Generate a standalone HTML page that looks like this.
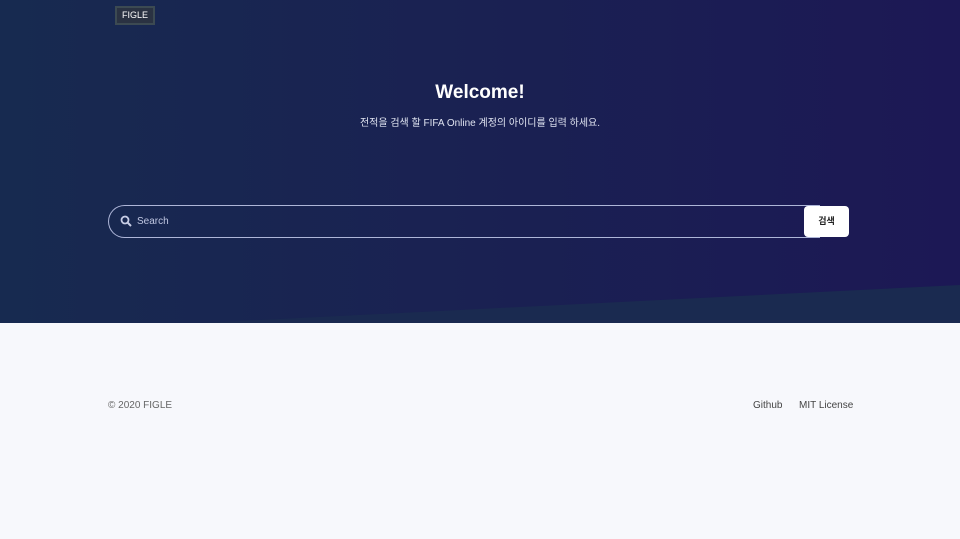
<!DOCTYPE html>
<html><head><meta charset="utf-8"><style>
*{margin:0;padding:0;box-sizing:border-box}
body{width:960px;height:539px;overflow:hidden;background:#f7f8fc;font-family:"Liberation Sans","Noto Sans CJK KR",sans-serif}
.hero{position:absolute;left:0;top:0;width:960px;height:323px;background:linear-gradient(90deg,#172a50 0%,#1a2152 50%,#1c1855 100%);overflow:hidden}
.logo{position:absolute;left:115px;top:6px;width:40px;height:19px;border:2px solid #3c4a52;background:#2a3242;color:#fff;font-size:9px;line-height:15px;text-align:center}
h1{position:absolute;top:82px;width:960px;text-align:center;color:#fff;font-size:19px;font-weight:bold}
.sub{position:absolute;top:114px;width:960px;text-align:center;color:#dfe3f0;font-size:10px}
.search{position:absolute;left:108px;top:205px;width:712px;height:33px;border:1.5px solid #aeb6d8;border-radius:17px 0 0 17px;border-right:none}
.search span{position:absolute;left:28px;top:10px;color:#c0c7e2;font-size:10px}
.btn{position:absolute;left:804px;top:206px;width:45px;height:31px;background:#fff;border-radius:4px;color:#222;font-size:9px;font-weight:bold;text-align:center;line-height:31px}
.ft{position:absolute;top:400px;font-size:10px;color:#444}
</style></head><body>
<div class="hero">
<svg style="position:absolute;left:0;top:0" width="960" height="323"><polygon points="200,323 960,285 960,323" fill="#1a2a50"/></svg>
<div class="logo">FIGLE</div>
<h1>Welcome!</h1>
<div class="sub">전적을 검색 할 FIFA Online 계정의 아이디를 입력 하세요.</div>
<div class="search"><svg style="position:absolute;left:11px;top:9px" width="12" height="12" viewBox="0 0 12 12"><circle cx="5" cy="5" r="3.5" fill="none" stroke="#c8cee6" stroke-width="1.8"/><line x1="7.5" y1="7.5" x2="11" y2="11" stroke="#c8cee6" stroke-width="2"/></svg><span>Search</span></div>
<div class="btn">검색</div>
</div>
<div class="ft" style="left:108px;color:#666">© 2020 FIGLE</div>
<div class="ft" style="left:753px">Github</div>
<div class="ft" style="left:799px">MIT License</div>
</body></html>
